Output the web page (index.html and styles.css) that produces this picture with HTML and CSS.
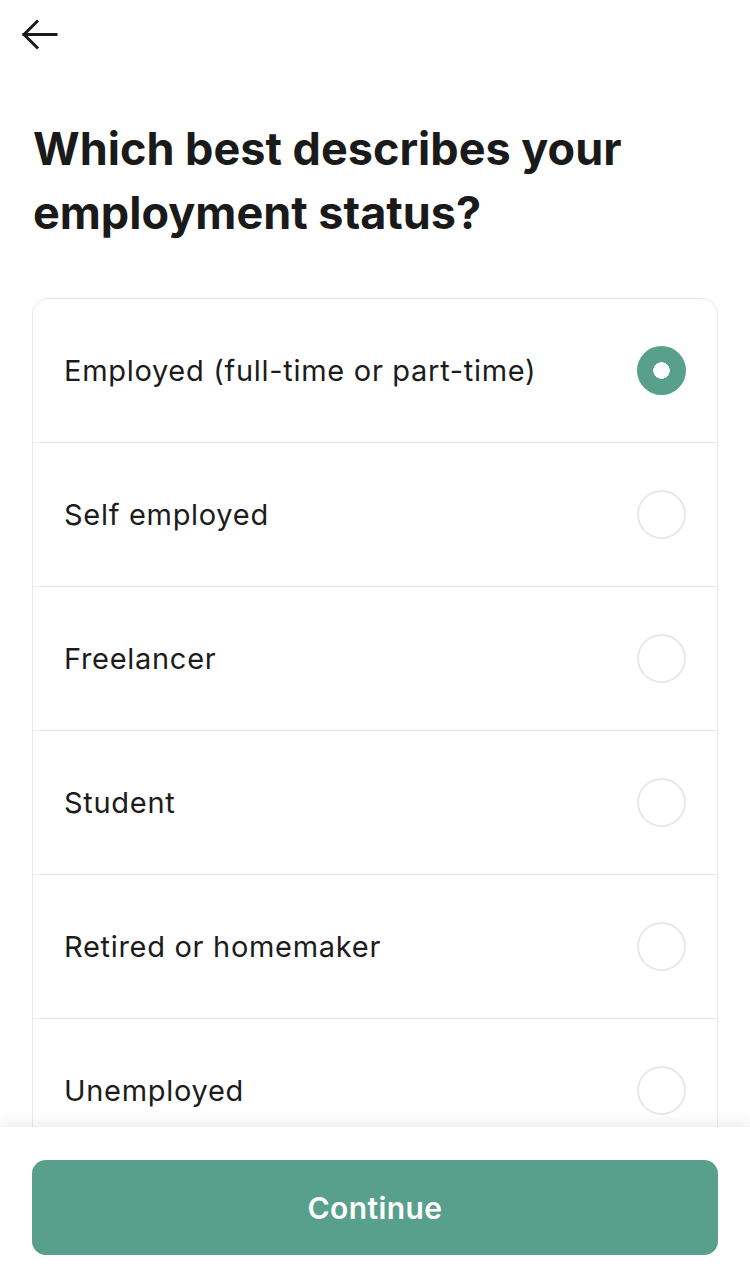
FILE: index.html
```html
<!DOCTYPE html>
<html lang="en">
  <head>
    <meta charset="UTF-8" />
    <meta name="viewport" content="width=device-width, initial-scale=1.0" />
    <title>Employment status</title>
    <link rel="stylesheet" href="styles.css">
  </head>
  <body>
    <div class="screen">
      <header class="top-bar">
        <button class="back-btn" aria-label="Back">
          <svg width="38" height="32" viewBox="0 0 38 32" fill="none" stroke="#1a1a1a" stroke-width="3" stroke-linecap="square">
            <path d="M35 15.5H3" />
            <path d="M16 2.5L3 15.5L16 28.5" />
          </svg>
        </button>
      </header>

      <h1 class="title">Which best describes your employment status?</h1>

      <ul class="options">
        <li class="option selected">
          <span>Employed (full-time or part-time)</span>
          <span class="radio"></span>
        </li>
        <li class="option">
          <span>Self employed</span>
          <span class="radio"></span>
        </li>
        <li class="option">
          <span>Freelancer</span>
          <span class="radio"></span>
        </li>
        <li class="option">
          <span>Student</span>
          <span class="radio"></span>
        </li>
        <li class="option">
          <span>Retired or homemaker</span>
          <span class="radio"></span>
        </li>
        <li class="option">
          <span>Unemployed</span>
          <span class="radio"></span>
        </li>
      </ul>
    </div>

    <footer class="bottom-bar">
      <button class="continue-btn">Continue</button>
    </footer>
  </body>
</html>
```

FILE: styles.css
```css
/* General */
body {
  font-family: Inter, "Noto Sans", sans-serif;
  background-color: #ffffff;
  color: #1a1a1a;
  margin: 0;
  padding: 0;
  height: 1288px;
  overflow: hidden;
}

.screen {
  padding: 0 32px;
}

/* Header */
.top-bar {
  height: 70px;
  display: flex;
  align-items: center;
}

.back-btn {
  background: none;
  border: none;
  padding: 0;
  margin-left: -11px;
  width: 38px;
  height: 32px;
  cursor: pointer;
}

/* Title */
.title {
  font-size: 45px;
  font-weight: 700;
  line-height: 64px;
  letter-spacing: 0;
  margin: 47px 0 53px;
  padding-left: 1px;
}

/* Option list */
.options {
  list-style: none;
  margin: 0;
  padding: 0;
  border: 1px solid #ebebeb;
  border-radius: 16px;
}

.option {
  height: 143px;
  display: flex;
  align-items: center;
  justify-content: space-between;
  padding: 0 31px;
  font-size: 29px;
  letter-spacing: 0.7px;
  color: #1c1c1c;
  border-bottom: 1px solid #ebebeb;
}

.option:last-child {
  border-bottom: none;
}

.radio {
  width: 45px;
  height: 45px;
  border: 2px solid #e8e8e8;
  border-radius: 50%;
  box-sizing: content-box;
  flex-shrink: 0;
}

.option.selected .radio {
  width: 49px;
  height: 49px;
  border: none;
  background: radial-gradient(circle, #ffffff 0 8px, #58a08b 8.5px);
}

/* Bottom bar */
.bottom-bar {
  position: fixed;
  left: 0;
  right: 0;
  bottom: 0;
  height: 161px;
  background: #ffffff;
  box-shadow: 0 -6px 12px rgba(0, 0, 0, 0.06);
  padding: 33px 32px 0;
  box-sizing: border-box;
}

.continue-btn {
  width: 100%;
  height: 95px;
  background-color: #58a08b;
  color: #ffffff;
  border: none;
  border-radius: 14px;
  font-family: Inter, "Noto Sans", sans-serif;
  font-size: 30px;
  font-weight: 600;
  letter-spacing: 0.4px;
  cursor: pointer;
}
```
